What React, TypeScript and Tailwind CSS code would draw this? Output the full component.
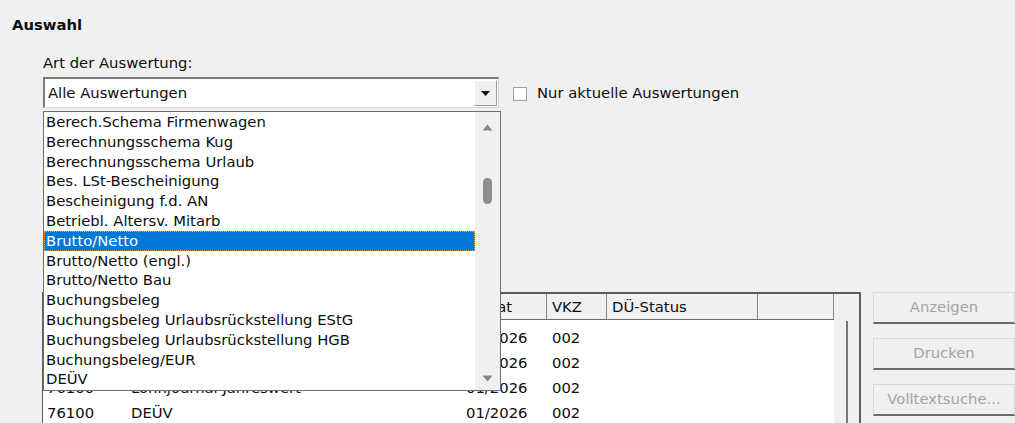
import React from "react";

const reportTypes = [
  "Berech.Schema Firmenwagen",
  "Berechnungsschema Kug",
  "Berechnungsschema Urlaub",
  "Bes. LSt-Bescheinigung",
  "Bescheinigung f.d. AN",
  "Betriebl. Altersv. Mitarb",
  "Brutto/Netto",
  "Brutto/Netto (engl.)",
  "Brutto/Netto Bau",
  "Buchungsbeleg",
  "Buchungsbeleg Urlaubsrückstellung EStG",
  "Buchungsbeleg Urlaubsrückstellung HGB",
  "Buchungsbeleg/EUR",
  "DEÜV",
];

// first two rows sit fully under the open drop-down, only month/VKZ peek out
const rows = [
  { nr: "", name: "", month: "01/2026", vkz: "002" },
  { nr: "", name: "", month: "01/2026", vkz: "002" },
  { nr: "76100", name: "Lohnjournal Jahreswert", month: "01/2026", vkz: "002" },
  { nr: "76100", name: "DEÜV", month: "01/2026", vkz: "002" },
];

const selected = "Brutto/Netto";

function Arrow({ up }: { up?: boolean }) {
  return (
    <svg width="11" height="7" viewBox="0 0 11 7" className="block">
      <polygon
        points={up ? "5.5,0.5 10.5,6.5 0.5,6.5" : "0.5,0.5 10.5,0.5 5.5,6.5"}
        fill="#868686"
      />
    </svg>
  );
}

function DropList() {
  return (
    <div className="absolute left-0 top-[34px] z-10 flex h-[280px] w-[458px] border border-[#6e6e6e] bg-white">
      <div className="flex-1">
        {reportTypes.map((t) => (
          <div
            key={t}
            className={
              t === selected
                ? "h-[19.8px] whitespace-nowrap bg-[#0078d7] pl-[2px] leading-[19.8px] text-white outline outline-1 -outline-offset-1 outline-dotted outline-[#e9a45a]"
                : "h-[19.8px] whitespace-nowrap pl-[2px] leading-[19.8px] text-[#0d0d0d]"
            }
          >
            {t}
          </div>
        ))}
      </div>
      <div className="flex w-[25px] flex-col items-center bg-[#f0f0f0]">
        <div className="mt-[12px]">
          <Arrow up />
        </div>
        <div className="mt-[47px] h-[26px] w-[9px] rounded-full bg-[#8e8e8e]" />
        <div className="mt-auto mb-[8px]">
          <Arrow />
        </div>
      </div>
    </div>
  );
}

function ComboBox() {
  return (
    <div className="relative">
      <div className="flex h-[31px] w-[456px] border-t-2 border-l-2 border-b border-r border-t-[#7c7c7c] border-l-[#7c7c7c] border-b-[#d6d6d6] border-r-[#d6d6d6] bg-white">
        <div className="flex-1 pl-[3px] leading-[28px] text-[#0d0d0d]">
          Alle Auswertungen
        </div>
        <div className="my-[1px] mr-[1px] flex w-[23px] items-center justify-center border-t border-l border-b border-r border-t-white border-l-white border-b-[#9a9a9a] border-r-[#9a9a9a] bg-[#f0f0f0]">
          <svg width="9" height="5" viewBox="0 0 9 5">
            <polygon points="0,0 9,0 4.5,5" fill="#111" />
          </svg>
        </div>
      </div>
      <DropList />
    </div>
  );
}

const cols = [
  { key: "nr", label: "Nr.", w: "w-[82px]" },
  { key: "name", label: "Bezeichnung", w: "w-[336px]" },
  { key: "month", label: "Monat", w: "w-[86px]" },
  { key: "vkz", label: "VKZ", w: "w-[60px]" },
  { key: "status", label: "DÜ-Status", w: "w-[151px]" },
  { key: "rest", label: "", w: "flex-1" },
] as const;

function ResultTable() {
  return (
    <div className="flex h-[140px] w-[820px] border-t-2 border-r-2 border-l border-[#5c5c5c] bg-[#f0f0f0]">
      <div className="flex flex-1 flex-col">
        <div className="flex h-[26px] border-b border-[#6a6a6a] bg-[#f0f0f0]">
          {cols.map((c) => (
            <div
              key={c.key}
              className={`${c.w} h-full whitespace-nowrap border-r border-[#8a8a8a] pl-[5px] leading-[25px] text-[#0d0d0d]`}
            >
              {c.label}
            </div>
          ))}
        </div>
        <div className="flex-1 bg-white pt-[5px]">
          {rows.map((r, i) => (
            <div key={i} className="flex h-[25px] leading-[25px] text-[#0d0d0d]">
              <div className="w-[82px] pl-[4px]">{r.nr}</div>
              <div className="w-[336px] pl-[6px] whitespace-nowrap">{r.name}</div>
              <div className="w-[86px] pl-[5px]">{r.month}</div>
              <div className="w-[60px] pl-[5px]">{r.vkz}</div>
              <div className="flex-1" />
            </div>
          ))}
        </div>
      </div>
      <div className="flex w-[25px] justify-center pt-[27px]">
        <div className="h-full w-[2px] bg-[#777]" />
      </div>
    </div>
  );
}

function SideButton({ label }: { label: string }) {
  return (
    <button
      disabled
      className="h-[32px] w-[142px] border border-[#dadada] border-b-2 border-b-[#6b6b6b] bg-[#f0f0f0] text-center text-[#a3a3a3]"
    >
      {label}
    </button>
  );
}

export default function App() {
  return (
    <div
      className="relative h-[423px] w-[1015px] overflow-hidden bg-[#f0f0f0] text-[14.8px] text-[#0d0d0d]"
      style={{ fontFamily: '"DejaVu Sans", Verdana, sans-serif' }}
    >
      <h1 className="pl-[12px] pt-[15px] text-[14.8px] font-bold leading-[20px]">
        Auswahl
      </h1>
      <div className="pl-[43px]">
        <p className="mt-[18px] leading-[20px]">Art der Auswertung:</p>
        <div className="mt-[4px] flex items-center gap-[14px]">
          <ComboBox />
          <label className="flex items-center gap-[10px]">
            <span className="mt-[3px] h-[14px] w-[14px] border border-[#a0a0a0] bg-white" />
            <span className="leading-[20px]">Nur aktuelle Auswertungen</span>
          </label>
        </div>
      </div>
      <div className="ml-[42px] mt-[184px] flex gap-[12px]">
        <ResultTable />
        <div className="flex flex-col gap-[14px]">
          <SideButton label="Anzeigen" />
          <SideButton label="Drucken" />
          <SideButton label="Volltextsuche..." />
        </div>
      </div>
    </div>
  );
}
